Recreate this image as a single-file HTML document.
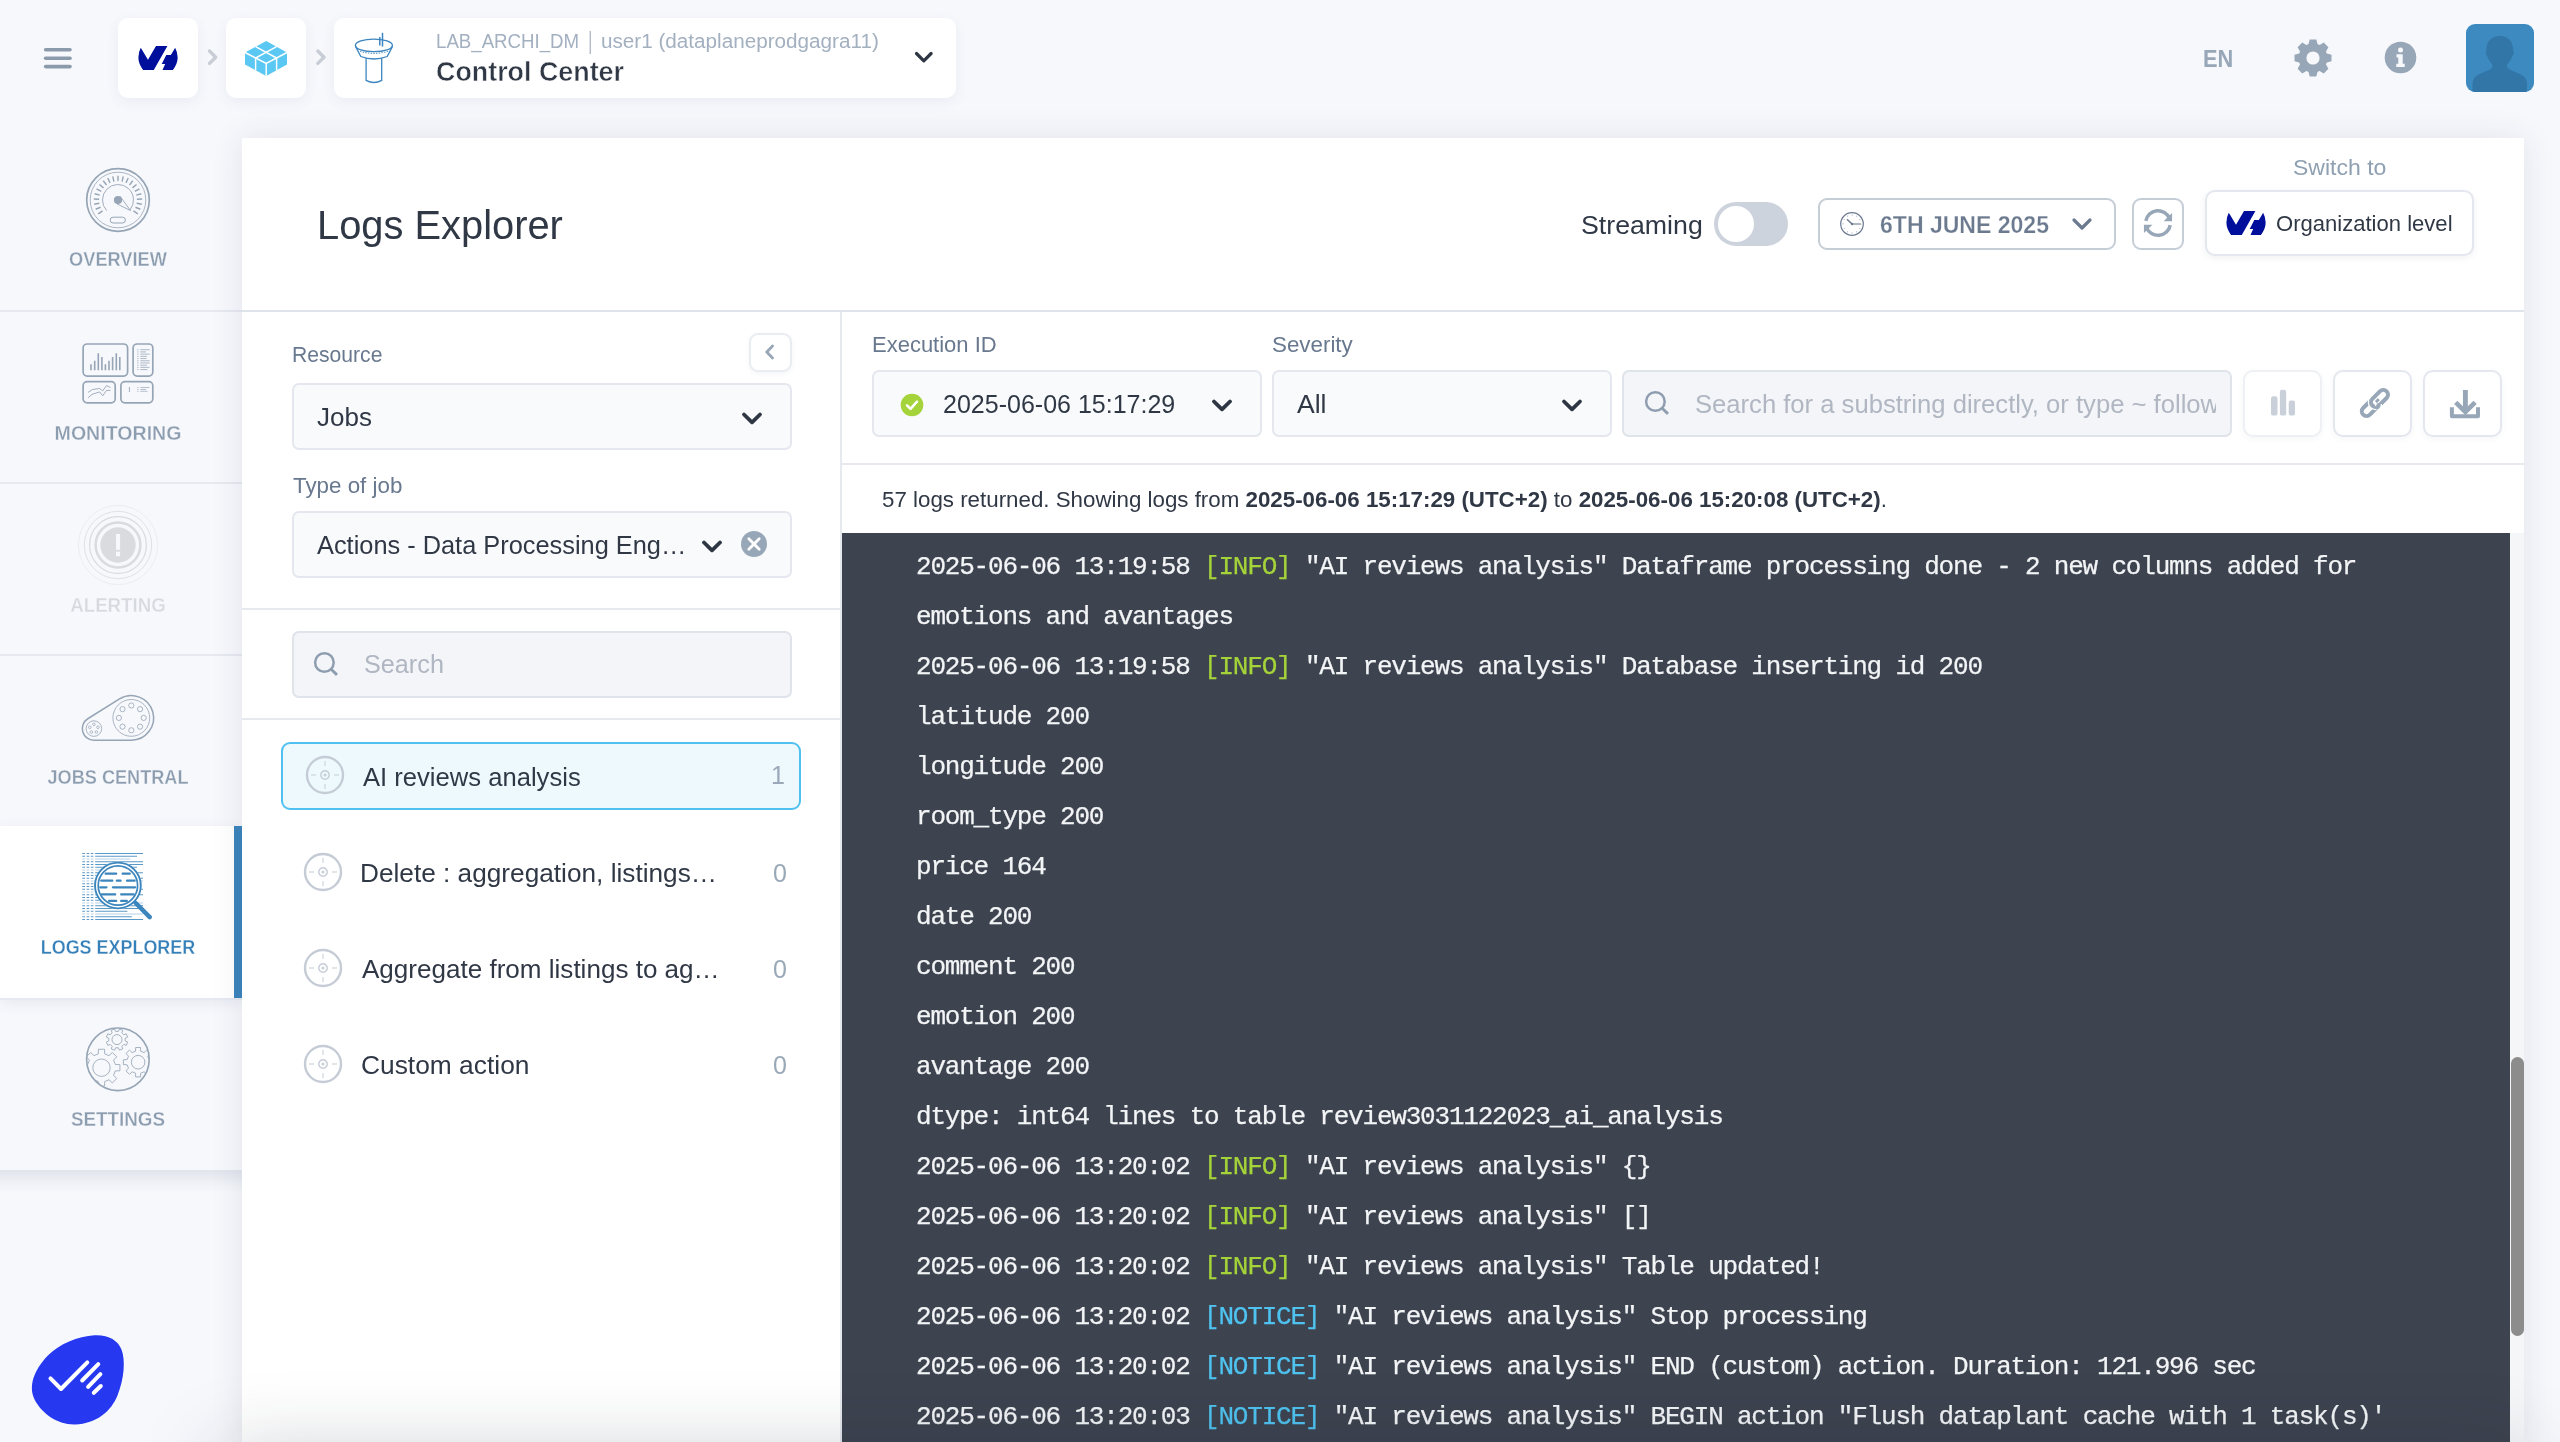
<!DOCTYPE html>
<html lang="en">
<head>
<meta charset="utf-8">
<title>Logs Explorer - Control Center</title>
<style>
*{box-sizing:border-box;margin:0;padding:0}
html,body{width:2560px;height:1442px;overflow:hidden;background:#f7f8fc}
#top,#side,#main,#logs{will-change:transform}
body{font-family:"Liberation Sans",sans-serif;color:#303846;position:relative}
.abs{position:absolute}
.t{position:absolute;white-space:nowrap;line-height:1}
svg{display:block;overflow:visible}

/* top bar */
.crumb{position:absolute;top:18px;height:80px;background:#fff;border-radius:10px;box-shadow:0 4px 14px rgba(60,80,120,.07)}
.sep{position:absolute;top:45px}

/* sidebar */
#side{position:absolute;left:0;top:138px;width:242px;height:1032px}
#side::after{content:'';position:absolute;left:0;top:1032px;width:242px;height:24px;background:linear-gradient(to bottom,rgba(60,75,110,.11),rgba(60,75,110,.03) 60%,rgba(60,75,110,0))}
.nav{position:absolute;left:0;width:242px;height:172px}
.nav::before{content:'';position:absolute;left:0;top:0;width:242px;height:2px;background:#e6e9f0}
.nav .lbl{position:absolute;left:0;width:236px;text-align:center;font-weight:bold;-webkit-text-stroke:.3px #f7f8fc;font-size:20.5px;color:#8d9db0;line-height:1;white-space:nowrap}
.nav.first::before,.nav.act::before{display:none}
.nav.act{background:#fff;box-shadow:0 4px 14px rgba(60,80,120,.10)}
.nav.act .lbl{color:#3680ba;-webkit-text-stroke-color:#fff}
.nav.dis .lbl{color:#d6d9de}

/* main */
#main{position:absolute;left:242px;top:138px;width:2282px;height:1304px;background:#fff;box-shadow:0 0 30px rgba(40,50,75,.10)}
.lab{position:absolute;font-size:21px;color:#68788e;line-height:1;white-space:nowrap}
.sel{position:absolute;height:67px;background:#f9fafc;border:2px solid #e4e8ee;border-radius:7px}
.sel .v{position:absolute;top:0px;line-height:63px;font-size:25px;color:#303846;white-space:nowrap}
.inp{position:absolute;height:67px;background:#f4f5f8;border:2px solid #dfe3ea;border-radius:7px}
.inp .ph{position:absolute;top:0;line-height:63px;font-size:25px;color:#b0b7c2;white-space:nowrap;overflow:hidden}
.btn{position:absolute;width:79px;height:67px;background:#fff;border:2px solid #e4e7ee;border-radius:10px;box-shadow:0 2px 6px rgba(60,80,120,.05)}
.hr{position:absolute;height:2px;background:#e6e9ee}
.item{position:absolute;left:281px;width:520px;height:67px}
.item .nm{position:absolute;left:80px;top:0;line-height:67px;font-size:25px;color:#303846;white-space:nowrap}
.item .ct{position:absolute;right:14px;top:0;line-height:67px;font-size:25px;color:#9aa8b8}
.item.on{background:#eef9fe;border:2px solid #4fc0f0;border-radius:9px}

/* logs */
#logs{position:absolute;left:842px;top:533px;width:1668px;height:909px;background:#3d434f;overflow:hidden}
#logs pre{position:absolute;left:74px;top:9px;font-family:"Liberation Mono",monospace;font-size:26px;letter-spacing:-1.2px;line-height:50px;color:#f2f4f6;white-space:pre;-webkit-text-stroke:.25px}
.i{color:#a5d33a}.n{color:#4fc3f0}
</style>
</head>
<body>

<!-- TOPBAR -->
<div id="top">
  <!-- hamburger -->
  <svg class="abs" style="left:43px;top:46px" width="30" height="24" viewBox="0 0 30 24"><g stroke="#8c9bab" stroke-width="3.6" stroke-linecap="round"><line x1="2.6" y1="3.8" x2="27" y2="3.8"/><line x1="2.6" y1="12.2" x2="27" y2="12.2"/><line x1="2.6" y1="20.6" x2="27" y2="20.6"/></g></svg>

  <!-- crumb 1 : logo -->
  <div class="crumb" style="left:118px;width:80px">
    <svg class="abs" style="left:20px;top:28px" width="40" height="24" viewBox="0 0 40 24"><g fill="#000e9c"><path d="M2.76,1.71 L9.97,13.64 L18,0.04 L29.4,0.04 L15.8,23.9 L5.1,23.9 Q0.4,17.5 0.4,11.4 Q0.4,6.2 2.76,1.71Z"/><path d="M37.16,1.7 L32.86,8.9 L28.28,8.9 L23.7,17.9 L27.17,17.9 L24.5,23.9 L34.9,23.9 Q39.65,17.5 39.65,11.4 Q39.65,6.2 37.16,1.7Z"/></g></svg>
  </div>
  <svg class="abs" style="left:204px;top:46px" width="18" height="24" viewBox="0 0 18 24"><polyline points="5.5,5 11.7,11.2 5.5,17.4" fill="none" stroke="#c8cdd6" stroke-width="3.4" stroke-linecap="round" stroke-linejoin="round"/></svg>

  <!-- crumb 2 : cubes -->
  <div class="crumb" style="left:226px;width:80px">
    <svg class="abs" style="left:18px;top:22px" width="44" height="37" viewBox="244 40 44 37"><polygon points="266.2,40.9 287,52.5 287,64.5 266.2,76.1 245,64.5 245,52.5" fill="#5bc8f3"/><g stroke="#fff" stroke-width="1.45" fill="none"><path d="M245,52.5 L266.2,63.5 L287,52.5"/><path d="M266.2,63.5 V76.1"/><path d="M255.6,46.7 L276.6,58 V70.3"/><path d="M276.6,46.7 L255.6,58 V70.3"/></g></svg>
  </div>
  <svg class="abs" style="left:312px;top:46px" width="18" height="24" viewBox="0 0 18 24"><polyline points="5.8,5 12,11.2 5.8,17.4" fill="none" stroke="#c8cdd6" stroke-width="3.4" stroke-linecap="round" stroke-linejoin="round"/></svg>

  <!-- crumb 3 : product selector -->
  <div class="crumb" style="left:334px;width:622px">
    <svg class="abs" style="left:20px;top:14px" width="40" height="52" viewBox="354 32 40 52"><g fill="none" stroke="#3d85c0" stroke-width="1.3"><ellipse cx="373.9" cy="45.4" rx="18.5" ry="6.3"/><path d="M355.5,46.4 L360.8,56.5 Q374,61.5 387.2,56.5 L392.5,46.4"/><path d="M360,51.3 Q374,55.5 388,51.3" stroke-dasharray="1.5 1.2" stroke-width="1.1" opacity=".8"/><path d="M366.1,58.3 V80.4 Q374,84.6 381.7,80.4 V58.3"/><path d="M382.5,32.8 V46.6" stroke-width="1.5"/><path d="M379.8,37 V45.6" stroke-width="1.5"/></g></svg>
    <div class="t" id="sub1" style="left:102.4px;top:12.5px;font-size:20px;color:#a3b0c0;letter-spacing:0px;transform:scaleX(0.9332);transform-origin:0 50%">LAB_ARCHI_DM</div><div class="t" id="sub2" style="left:254.2px;top:11.5px;font-size:23px;color:#b3bdca;letter-spacing:0px;transform:scaleX(0.7716);transform-origin:0 50%">|</div><div class="t" id="sub3" style="left:267.0px;top:12.5px;font-size:20px;color:#a3b0c0;letter-spacing:0px;transform:scaleX(1.0337);transform-origin:0 50%">user1 (dataplaneprodgagra11)</div>
    <div class="t" id="ttl" style="left:102.0px;top:39.9px;font-size:28px;font-weight:bold;color:#303846;letter-spacing:0px;transform:scaleX(0.9591);transform-origin:0 50%;-webkit-text-stroke:.5px #fff">Control Center</div>
    <svg class="abs" style="left:578px;top:31px" width="24" height="18" viewBox="0 0 24 18"><polyline points="4.5,4.5 11.8,11.8 19.1,4.5" fill="none" stroke="#2e3643" stroke-width="3.2" stroke-linecap="round" stroke-linejoin="round"/></svg>
  </div>

  <!-- right tools -->
  <div class="t" id="en" style="left:2203.1px;top:46.9px;font-size:24.5px;font-weight:bold;color:#98a7b7;letter-spacing:0px;transform:scaleX(0.8889);transform-origin:0 50%">EN</div>
  <svg class="abs" style="left:2293px;top:38px" width="40" height="40" viewBox="-20 -20 40 40"><g fill="#98a7b7"><circle r="14.4"/><path d="M-4.8,-13 L-3.3,-18.5 H3.3 L4.8,-13Z" transform="rotate(0)"/><path d="M-4.8,-13 L-3.3,-18.5 H3.3 L4.8,-13Z" transform="rotate(45)"/><path d="M-4.8,-13 L-3.3,-18.5 H3.3 L4.8,-13Z" transform="rotate(90)"/><path d="M-4.8,-13 L-3.3,-18.5 H3.3 L4.8,-13Z" transform="rotate(135)"/><path d="M-4.8,-13 L-3.3,-18.5 H3.3 L4.8,-13Z" transform="rotate(180)"/><path d="M-4.8,-13 L-3.3,-18.5 H3.3 L4.8,-13Z" transform="rotate(225)"/><path d="M-4.8,-13 L-3.3,-18.5 H3.3 L4.8,-13Z" transform="rotate(270)"/><path d="M-4.8,-13 L-3.3,-18.5 H3.3 L4.8,-13Z" transform="rotate(315)"/></g><circle r="6.6" fill="#f7f8fc"/></svg>
  <svg class="abs" style="left:2384px;top:41px" width="33" height="33" viewBox="-16.5 -16.5 33 33"><circle r="15.8" fill="#98a7b7"/><g fill="#f7f8fc"><circle cx="0" cy="-7.6" r="2.5"/><path d="M-4,-3.2 H2.2 V6.3 H4.2 V9.5 H-4.2 V6.3 H-2.2 V0 H-4Z"/></g></svg>
  <div class="abs" style="left:2466px;top:24px;width:68px;height:68px;border-radius:9px;background:#3d8ac0;overflow:hidden">
    <svg width="68" height="68" viewBox="2466 24 68 68"><path d="M2499.8,36 C2508,36 2513,41.5 2513,49 C2513,51 2514,51.5 2513.6,53.5 C2513.2,55.5 2512.2,55.8 2511.8,57 C2511,60 2508.5,62.5 2507.2,64.5 C2506.6,66.5 2507.2,68.2 2509,69.2 L2521,74.5 C2525,76.5 2527,79.5 2527,84 V92 H2472.5 V84 C2472.5,79.5 2474.5,76.5 2478.5,74.5 L2490.5,69.2 C2492.3,68.2 2492.9,66.5 2492.3,64.5 C2491,62.5 2488.5,60 2487.7,57 C2487.3,55.8 2486.3,55.5 2485.9,53.5 C2485.5,51.5 2486.5,51 2486.5,49 C2486.5,41.5 2491.5,36 2499.8,36Z" fill="#3275a7"/></svg>
  </div>
</div>

<!-- SIDEBAR -->
<div id="side">
  <div class="nav first" style="top:0px;height:172px"><svg class="abs" style="left:84px;top:28px" width="68" height="68" viewBox="-34 -34 68 68"><g fill="none" stroke="#96a5b5"><circle r="31.3" stroke-width="1.7"/><circle r="27.8" stroke-width=".8"/><path d="M-15.48,10.84L-19.82,13.88M-17.46,7.23L-22.36,9.26M-18.61,3.28L-23.83,4.2M-18.88,-0.82L-24.18,-1.06M-18.26,-4.89L-23.38,-6.26M-16.76,-8.73L-21.47,-11.17M-14.48,-12.15L-18.54,-15.56M-11.51,-14.99L-14.73,-19.2M-7.99,-17.13L-10.23,-21.93M-4.09,-18.45L-5.24,-23.63M0,-18.9L0,-24.2M4.09,-18.45L5.24,-23.63M7.99,-17.13L10.23,-21.93M11.51,-14.99L14.73,-19.2M14.48,-12.15L18.54,-15.56M16.76,-8.73L21.47,-11.17M18.26,-4.89L23.38,-6.26M18.88,-0.82L24.18,-1.06M18.61,3.28L23.83,4.2M17.46,7.23L22.36,9.26M15.48,10.84L19.82,13.88" stroke-width="1.4"/><path d="M-11.34,10.57 A15.5,15.5 0 1 1 12.05,9.75" stroke-width=".9"/><circle r="4.1" fill="#96a5b5" stroke="none"/><path d="M2.2,-3.4 L12.6,10.6 L-1,3.9Z" stroke-width=".9" fill="none"/><rect x="-7.8" y="17.2" width="15.2" height="5.8" rx="2.9" stroke-width="1"/></g></svg><div class="lbl" id="l_ov" style="top:110.7px;letter-spacing:0px;transform:scaleX(0.8881);transform-origin:50% 50%">OVERVIEW</div></div>
  <div class="nav " style="top:172px;height:172px"><svg class="abs" style="left:80px;top:30px" width="76" height="66" viewBox="80 340 76 66"><g fill="none" stroke="#96a5b5"><g stroke-width="1.7"><rect x="83.1" y="344" width="44.5" height="32.1" rx="4"/><rect x="133.1" y="344" width="19.7" height="32.1" rx="4"/><rect x="83.1" y="381.7" width="32.1" height="21.1" rx="4"/><rect x="120.9" y="381.7" width="31.9" height="21.1" rx="4"/></g><path d="M91,364.2V370.3M94.7,360.8V370.3M98.3,353.3V370.3M101.9,357.1V370.3M105.4,364.2V370.3M109,360.8V370.3M112.6,357.1V370.3M116.3,353.3V370.3M119.8,357.1V370.3" stroke-width="1.6"/><path d="M137.2,349.7h1.3M140.3,349.7H149.7M137.2,351.91h1.3M140.3,351.91H146M137.2,354.12h1.3M140.3,354.12H149.7M137.2,356.33h1.3M140.3,356.33H147M137.2,358.54h1.3M140.3,358.54H146.5M137.2,360.75h1.3M140.3,360.75H149.7M137.2,362.96h1.3M140.3,362.96H149.7M137.2,365.17h1.3M140.3,365.17H147M137.2,367.38h1.3M140.3,367.38H149.5M137.2,369.59h1.3M140.3,369.59H147.5" stroke-width=".9" opacity=".85"/><polyline points="88.1,392.4 92.5,389.5 99.7,388.5 102.7,390.9 106.5,385.6 110.4,387.5" stroke-width=".9"/><polyline points="88.1,397.7 92,394.3 99.7,391.9 102.7,395.8 106.5,390.4 110.4,390.4" stroke-width=".9"/><path d="M129.4,387V392.1" stroke-width=".9"/><path d="M137.2,387.5h1.3M140.3,387.5H149.3M137.2,389.5h1.3M140.3,389.5H146M137.2,391.3h1.3M140.3,391.3H147.5" stroke-width=".8" opacity=".85"/></g></svg><div class="lbl" id="l_mo" style="top:113.0px;letter-spacing:0px;transform:scaleX(0.9547);transform-origin:50% 50%">MONITORING</div></div>
  <div class="nav dis" style="top:344px;height:172px"><svg class="abs" style="left:76px;top:21px" width="84" height="84" viewBox="-42 -42 84 84"><g fill="none" stroke="#d9dbde"><circle r="39.6" stroke-width=".5" opacity=".8"/><circle r="33.7" stroke-width=".8"/><circle r="28.4" stroke-width="1.2"/><circle r="22.4" stroke-width="2.5"/><circle r="17.7" fill="#d9dbde" stroke="none"/><rect x="-2" y="-11" width="4.1" height="15.8" fill="#f7f8fc" stroke="none"/><rect x="-2" y="6.7" width="4.1" height="4.6" fill="#f7f8fc" stroke="none"/></g></svg><div class="lbl" id="l_al" style="top:113.0px;letter-spacing:0px;transform:scaleX(0.9126);transform-origin:50% 50%">ALERTING</div></div>
  <div class="nav " style="top:516px;height:172px"><svg class="abs" style="left:78px;top:36px" width="80" height="52" viewBox="78 690 80 52"><g fill="none" stroke="#96a5b5"><path d="M119.51,698.97 L87.76,718.76 A11.6,11.6 0 0 0 93.9,740.2 L131.3,740.2 A22.3,22.3 0 1 0 119.51,698.97Z" stroke-width="1.5"/><circle cx="131.3" cy="717.9" r="18.4" stroke-width=".8"/><circle cx="93.9" cy="728.6" r="7.8" stroke-width=".8"/><circle cx="131.3" cy="705.5" r="2.6" stroke-width=".8"/><circle cx="140.07" cy="709.13" r="2.6" stroke-width=".8"/><circle cx="143.7" cy="717.9" r="2.6" stroke-width=".8"/><circle cx="140.07" cy="726.67" r="2.6" stroke-width=".8"/><circle cx="131.3" cy="730.3" r="2.6" stroke-width=".8"/><circle cx="122.53" cy="726.67" r="2.6" stroke-width=".8"/><circle cx="118.9" cy="717.9" r="2.6" stroke-width=".8"/><circle cx="122.53" cy="709.13" r="2.6" stroke-width=".8"/><circle cx="93.9" cy="724.3" r="1.3" stroke-width=".7"/><circle cx="97.99" cy="727.27" r="1.3" stroke-width=".7"/><circle cx="96.43" cy="732.08" r="1.3" stroke-width=".7"/><circle cx="91.37" cy="732.08" r="1.3" stroke-width=".7"/><circle cx="89.81" cy="727.27" r="1.3" stroke-width=".7"/></g></svg><div class="lbl" id="l_jc" style="top:113.2px;letter-spacing:0px;transform:scaleX(0.8847);transform-origin:50% 50%">JOBS CENTRAL</div></div>
  <div class="nav act" style="top:688px;height:172px"><svg class="abs" style="left:80px;top:24px" width="76" height="74" viewBox="80 850 76 74"><g fill="none" stroke="#3c85bd"><path d="M82.3,853.5H85M86.6,853.5H89.3M90.8,853.5H93.4M95.2,853.5H143" stroke-width=".85" opacity="1"/><path d="M82.3,856.25H85M86.6,856.25H89.3M90.8,856.25H93.4M95.2,856.25H137" stroke-width=".85" opacity="1"/><path d="M82.3,859H85M86.6,859H89.3M90.8,859H93.4M95.2,859H130.3" stroke-width=".85" opacity=".45"/><path d="M82.3,861.75H85M86.6,861.75H89.3M90.8,861.75H93.4M95.2,861.75H143" stroke-width=".85" opacity="1"/><path d="M82.3,864.5H85M86.6,864.5H89.3M90.8,864.5H93.4M95.2,864.5H143" stroke-width=".85" opacity="1"/><path d="M82.3,867.25H85M86.6,867.25H89.3M90.8,867.25H93.4M95.2,867.25H137" stroke-width=".85" opacity="1"/><path d="M82.3,870H85M86.6,870H89.3M90.8,870H93.4M95.2,870H130" stroke-width=".85" opacity=".45"/><path d="M82.3,872.75H85M86.6,872.75H89.3M90.8,872.75H93.4M95.2,872.75H143" stroke-width=".85" opacity="1"/><path d="M82.3,875.5H85M86.6,875.5H89.3M90.8,875.5H93.4M95.2,875.5H137" stroke-width=".85" opacity="1"/><path d="M82.3,878.25H85M86.6,878.25H89.3M90.8,878.25H93.4M95.2,878.25H143" stroke-width=".85" opacity="1"/><path d="M82.3,881H85M86.6,881H89.3M90.8,881H93.4M95.2,881H143" stroke-width=".85" opacity=".45"/><path d="M82.3,883.75H85M86.6,883.75H89.3M90.8,883.75H93.4M95.2,883.75H137" stroke-width=".85" opacity="1"/><path d="M82.3,886.5H85M86.6,886.5H89.3M90.8,886.5H93.4M95.2,886.5H130" stroke-width=".85" opacity="1"/><path d="M82.3,889.25H85M86.6,889.25H89.3M90.8,889.25H93.4M95.2,889.25H143" stroke-width=".85" opacity="1"/><path d="M82.3,892H85M86.6,892H89.3M90.8,892H93.4M95.2,892H137" stroke-width=".85" opacity=".45"/><path d="M82.3,894.75H85M86.6,894.75H89.3M90.8,894.75H93.4M95.2,894.75H143" stroke-width=".85" opacity="1"/><path d="M82.3,897.5H85M86.6,897.5H89.3M90.8,897.5H93.4M95.2,897.5H137" stroke-width=".85" opacity="1"/><path d="M82.3,900.25H85M86.6,900.25H89.3M90.8,900.25H93.4M95.2,900.25H130" stroke-width=".85" opacity="1"/><path d="M82.3,903H85M86.6,903H89.3M90.8,903H93.4M95.2,903H143" stroke-width=".85" opacity=".45"/><path d="M82.3,905.75H85M86.6,905.75H89.3M90.8,905.75H93.4M95.2,905.75H143" stroke-width=".85" opacity="1"/><path d="M82.3,908.5H85M86.6,908.5H89.3M90.8,908.5H93.4M95.2,908.5H143" stroke-width=".85" opacity="1"/><path d="M82.3,911.25H85M86.6,911.25H89.3M90.8,911.25H93.4M95.2,911.25H127.4" stroke-width=".85" opacity="1"/><path d="M82.3,914H85M86.6,914H89.3M90.8,914H93.4M95.2,914H143" stroke-width=".85" opacity=".45"/><path d="M82.3,916.75H85M86.6,916.75H89.3M90.8,916.75H93.4M95.2,916.75H131.8" stroke-width=".85" opacity="1"/><path d="M82.3,919.5H85M86.6,919.5H89.3M90.8,919.5H93.4M95.2,919.5H143" stroke-width=".85" opacity="1"/><circle cx="117.9" cy="885.5" r="23.8" fill="#fff" stroke="none"/><circle cx="117.9" cy="885.5" r="22.9" stroke-width="1.9"/><circle cx="117.9" cy="885.5" r="19.7" stroke-width="1.7"/><path d="M105.6,873.7H116.22M122.59,873.7H129.82M101.23,880.7H112.34M116.77,880.7H120.59M126.96,880.7H134.67M100.26,887.3H106.51M112.88,887.3H135.16M101.72,894.4H115.25M121.14,894.4H133.7M109,900.9H116.22M121.14,900.9H126.9" stroke-width="2.2" stroke-linecap="round"/><path d="M135.7,903 L149.7,917.1" stroke-width="4.4" stroke-linecap="round"/></g></svg><div class="lbl" id="l_le" style="top:111.0px;letter-spacing:0px;transform:scaleX(0.8748);transform-origin:50% 50%">LOGS EXPLORER</div><div class="abs" style="left:234px;top:0;width:8px;height:172px;background:#3c85bd"></div></div>
  <div class="nav " style="top:860px;height:172px"><svg class="abs" style="left:84px;top:27px" width="68" height="68" viewBox="84 1025 68 68"><g fill="none" stroke="#96a5b5"><defs><clipPath id="sc"><circle cx="117.9" cy="1059.3" r="30.8"/></clipPath></defs><circle cx="117.9" cy="1059.3" r="31.3" stroke-width="1.6"/><g clip-path="url(#sc)" stroke-width=".85"><path d="M118.36,1031.41 L119.46,1028.98 L122.77,1030.35 L121.83,1032.85 L123.75,1034.77 L126.25,1033.83 L127.62,1037.14 L125.19,1038.24 L125.19,1040.96 L127.62,1042.06 L126.25,1045.37 L123.75,1044.43 L121.83,1046.35 L122.77,1048.85 L119.46,1050.22 L118.36,1047.79 L115.64,1047.79 L114.54,1050.22 L111.23,1048.85 L112.17,1046.35 L110.25,1044.43 L107.75,1045.37 L106.38,1042.06 L108.81,1040.96 L108.81,1038.24 L106.38,1037.14 L107.75,1033.83 L110.25,1034.77 L112.17,1032.85 L111.23,1030.35 L114.54,1028.98 L115.64,1031.41Z"/><circle cx="117" cy="1039.6" r="5"/><path d="M98.29,1053.87 L98.43,1049.25 L104.57,1049.25 L104.71,1053.87 L109.01,1055.65 L112.37,1052.49 L116.71,1056.83 L113.55,1060.19 L115.33,1064.49 L119.95,1064.63 L119.95,1070.77 L115.33,1070.91 L113.55,1075.21 L116.71,1078.57 L112.37,1082.91 L109.01,1079.75 L104.71,1081.53 L104.57,1086.15 L98.43,1086.15 L98.29,1081.53 L93.99,1079.75 L90.63,1082.91 L86.29,1078.57 L89.45,1075.21 L87.67,1070.91 L83.05,1070.77 L83.05,1064.63 L87.67,1064.49 L89.45,1060.19 L86.29,1056.83 L90.63,1052.49 L93.99,1055.65Z"/><circle cx="101.5" cy="1067.7" r="8.7"/><path d="M135.55,1051.19 L135.65,1047.5 L140.55,1047.5 L140.65,1051.19 L144.08,1052.61 L146.76,1050.08 L150.22,1053.54 L147.69,1056.22 L149.11,1059.65 L152.8,1059.75 L152.8,1064.65 L149.11,1064.75 L147.69,1068.18 L150.22,1070.86 L146.76,1074.32 L144.08,1071.79 L140.65,1073.21 L140.55,1076.9 L135.65,1076.9 L135.55,1073.21 L132.12,1071.79 L129.44,1074.32 L125.98,1070.86 L128.51,1068.18 L127.09,1064.75 L123.4,1064.65 L123.4,1059.75 L127.09,1059.65 L128.51,1056.22 L125.98,1053.54 L129.44,1050.08 L132.12,1052.61Z"/><circle cx="138.1" cy="1062.2" r="6.8"/></g></g></svg><div class="lbl" id="l_se" style="top:111.0px;letter-spacing:0px;transform:scaleX(0.9178);transform-origin:50% 50%">SETTINGS</div></div>
</div>

<!-- MAIN -->
<div id="main">
  <div class="t" id="h1" style="left:75.2px;top:66.6px;font-size:40px;color:#303846;letter-spacing:0px;transform:scaleX(0.9963);transform-origin:0 50%">Logs Explorer</div>
  <div class="t" id="strm" style="left:1339.4px;top:74.3px;font-size:26px;color:#303846;letter-spacing:0px;transform:scaleX(1.0275);transform-origin:0 50%">Streaming</div>
  <div class="abs" style="left:1472px;top:64px;width:74px;height:44px;border-radius:22px;background:#cdd3dc"><div class="abs" style="left:4px;top:4px;width:36px;height:36px;border-radius:18px;background:#fff"></div></div>
  <div class="abs" style="left:1576px;top:60px;width:298px;height:52px;border:2px solid #c5cdd7;border-radius:9px;background:#fff"><svg class="abs" style="left:18.500px;top:11px" width="26" height="26" viewBox="-13 -13 26 26"><g fill="none" stroke="#6b7a8e"><circle r="11.3" stroke-width="1.2"/><path d="M-5,-4.700L0,0" stroke-width="1.5"/><path d="M0,0H8.800" stroke-width="1.1"/><circle r="9" stroke-width="1" stroke-dasharray=".9 3.810" stroke-dashoffset=".45" opacity=".8"/><circle r="1.2" fill="#6b7a8e" stroke="none"/></g></svg><div class="t" id="date" style="left:60.2px;top:12.9px;font-size:24.5px;font-weight:bold;color:#7c8b9c;letter-spacing:0px;transform:scaleX(0.9401);transform-origin:0 50%;-webkit-text-stroke:.25px #fff;color:#6b7a8e">6TH JUNE 2025</div><svg class="abs" style="left:251px;top:17px" width="22" height="14" viewBox="0 0 22 14"><polyline points="3,3 11,11 19,3" fill="none" stroke="#6b7a8e" stroke-width="3.2" stroke-linecap="round" stroke-linejoin="round"/></svg></div>
  <div class="abs" style="left:1890px;top:60px;width:52px;height:52px;border:2px solid #c5cdd7;border-radius:9px;background:#fff"><svg class="abs" style="left:8.100px;top:8.400px" width="32" height="30" viewBox="-16 -15 32 30"><g fill="none" stroke="#98a7b7" stroke-width="3.500"><path d="M-12.200,-2.100 A12.400,12.400 0 0 1 11.500,-4.600"/><path d="M12.200,2.100 A12.400,12.400 0 0 1 -11.500,4.600"/></g><g fill="#98a7b7"><path d="M14.050,-10.100 V-1.700 H5.650Z"/><path d="M-14.050,10.100 V1.700 H-5.650Z"/></g></svg></div>
  <div class="t" id="swt" style="left:2050.6px;top:18.8px;font-size:21.6px;color:#98a7b7;letter-spacing:0px;transform:scaleX(1.0658);transform-origin:0 50%;color:#8fa0b2">Switch to</div>
  <div class="abs" style="left:1963px;top:52px;width:269px;height:66px;border:2px solid #e4e7ee;border-radius:10px;background:#fff;box-shadow:0 2px 6px rgba(60,80,120,.08)"><svg class="abs" style="left:19px;top:19px" width="40" height="24" viewBox="0 0 40 24"><g fill="#000e9c"><path d="M2.76,1.71 L9.97,13.64 L18,0.04 L29.4,0.04 L15.8,23.9 L5.1,23.9 Q0.4,17.5 0.4,11.4 Q0.4,6.2 2.76,1.71Z"/><path d="M37.16,1.7 L32.86,8.9 L28.28,8.9 L23.7,17.9 L27.17,17.9 L24.5,23.9 L34.9,23.9 Q39.65,17.5 39.65,11.4 Q39.65,6.2 37.16,1.7Z"/></g></svg><div class="t" id="org" style="left:68.9px;top:20.9px;font-size:22.5px;color:#303846;letter-spacing:0px;transform:scaleX(0.9802);transform-origin:0 50%">Organization level</div></div>
  <div class="hr" style="left:0;top:172px;width:2282px;background:#dfe3ea"></div>
  <div class="abs" style="left:598px;top:174px;width:2px;height:1130px;background:#e6e9ee"></div>
  <div class="lab" id="lres" style="left:50.2px;top:206.0px;letter-spacing:0px;font-size:22px;transform:scaleX(0.9605);transform-origin:0 50%">Resource</div>
  <div class="abs" style="left:506.5px;top:194.5px;width:43px;height:39px;border:2px solid #e9ecf1;border-radius:9px;background:#fff;box-shadow:0 2px 5px rgba(60,80,120,.06)"><svg class="abs" style="left:12px;top:8px" width="14" height="18" viewBox="0 0 14 18"><polyline points="9.5,3 3.8,9 9.5,15" fill="none" stroke="#98a7b7" stroke-width="2.8" stroke-linecap="round" stroke-linejoin="round"/></svg></div>
  <div class="sel" style="left:50px;top:245px;width:500px"><div class="v" id="vjobs" style="left:23.4px;letter-spacing:0px;top:0.7px;font-size:26px;transform:scaleX(1.0003);transform-origin:0 50%">Jobs</div><svg class="abs" style="left:446px;top:26px" width="24" height="16" viewBox="0 0 24 16"><polyline points="4,3.5 12,11.3 20,3.5" fill="none" stroke="#2e3643" stroke-width="3.8" stroke-linecap="round" stroke-linejoin="round"/></svg></div>
  <div class="lab" id="ltype" style="left:51.2px;top:336.8px;letter-spacing:0px;font-size:22px;transform:scaleX(1.0156);transform-origin:0 50%">Type of job</div>
  <div class="sel" style="left:50px;top:373px;width:500px"><div class="v" id="vact" style="left:22.6px;letter-spacing:0px;top:0.6px;font-size:26px;transform:scaleX(0.9754);transform-origin:0 50%">Actions - Data Processing Eng…</div><svg class="abs" style="left:406px;top:26px" width="24" height="16" viewBox="0 0 24 16"><polyline points="4,3.5 12,11.3 20,3.5" fill="none" stroke="#2e3643" stroke-width="3.8" stroke-linecap="round" stroke-linejoin="round"/></svg><svg class="abs" style="left:446px;top:17px" width="28" height="28" viewBox="-14 -14 28 28"><circle r="13" fill="#98a7b7"/><path d="M-5.2,-5.2L5.2,5.2M5.2,-5.2L-5.2,5.2" stroke="#fff" stroke-width="2.8" stroke-linecap="round"/></svg></div>
  <div class="hr" style="left:0;top:470px;width:598px"></div>
  <div class="inp" style="left:50px;top:493px;width:500px"><svg class="abs" style="left:20px;top:18px" width="28" height="28" viewBox="0 0 28 28"><g fill="none" stroke="#8e9eb0"><circle cx="10.400" cy="11.550" r="9.300" stroke-width="2.500"/><path d="M16.900,18.050 L23,23.900" stroke-width="2.900"/></g></svg><div class="ph" id="phs" style="left:69.8px;letter-spacing:0px;top:0.3px;font-size:26px;transform:scaleX(0.9699);transform-origin:0 50%">Search</div></div>
  <div class="hr" style="left:0;top:580px;width:598px"></div>
  <div class="item on" style="left:39px;top:604px;width:520px;height:68px"><div style="position:absolute;left:22px;top:11px"><svg width="40" height="40" viewBox="-20 -20 40 40"><g fill="none" stroke="#c5ccd6"><circle r="18" stroke-width="2.4"/><circle r="4.2" stroke-width="1.4"/><circle r="1.6" fill="#c9d0d9" stroke="none"/><path d="M0,-14V-9M0,9V14M-14,0H-9M9,0H14" stroke-width="1"/></g></svg></div><div class="nm" id="i1" style="left:79.8px;line-height:63px;letter-spacing:0px;top:2.2px;font-size:26px;transform:scaleX(0.9847);transform-origin:0 50%">AI reviews analysis</div><div class="ct" style="right:14px;line-height:63px">1</div></div>
  <div class="item" style="left:39px;top:702px"><div style="position:absolute;left:22px;top:12px"><svg width="40" height="40" viewBox="-20 -20 40 40"><g fill="none" stroke="#c5ccd6"><circle r="18" stroke-width="2.4"/><circle r="4.2" stroke-width="1.4"/><circle r="1.6" fill="#c9d0d9" stroke="none"/><path d="M0,-14V-9M0,9V14M-14,0H-9M9,0H14" stroke-width="1"/></g></svg></div><div class="nm" id="i2" style="left:79.4px;top:0.0px;font-size:26px;letter-spacing:0px;transform:scaleX(1.0081);transform-origin:0 50%">Delete : aggregation, listings…</div><div class="ct">0</div></div>
  <div class="item" style="left:39px;top:798px"><div style="position:absolute;left:22px;top:12px"><svg width="40" height="40" viewBox="-20 -20 40 40"><g fill="none" stroke="#c5ccd6"><circle r="18" stroke-width="2.4"/><circle r="4.2" stroke-width="1.4"/><circle r="1.6" fill="#c9d0d9" stroke="none"/><path d="M0,-14V-9M0,9V14M-14,0H-9M9,0H14" stroke-width="1"/></g></svg></div><div class="nm" id="i3" style="left:81.4px;top:0.1px;font-size:26px;letter-spacing:0px;transform:scaleX(1.0019);transform-origin:0 50%">Aggregate from listings to ag…</div><div class="ct">0</div></div>
  <div class="item" style="left:39px;top:894px"><div style="position:absolute;left:22px;top:12px"><svg width="40" height="40" viewBox="-20 -20 40 40"><g fill="none" stroke="#c5ccd6"><circle r="18" stroke-width="2.4"/><circle r="4.2" stroke-width="1.4"/><circle r="1.6" fill="#c9d0d9" stroke="none"/><path d="M0,-14V-9M0,9V14M-14,0H-9M9,0H14" stroke-width="1"/></g></svg></div><div class="nm" id="i4" style="left:80.4px;top:-0.1px;font-size:26px;letter-spacing:0px;transform:scaleX(1.0136);transform-origin:0 50%">Custom action</div><div class="ct">0</div></div>
  <div class="lab" id="lexe" style="left:629.8px;top:196.0px;letter-spacing:0px;font-size:22px;transform:scaleX(0.9995);transform-origin:0 50%">Execution ID</div>
  <div class="lab" id="lsev" style="left:1029.8px;top:196.0px;letter-spacing:0px;font-size:22px;transform:scaleX(1.0163);transform-origin:0 50%">Severity</div>
  <div class="sel" style="left:630px;top:232px;width:390px"><svg class="abs" style="left:26px;top:21px" width="24" height="24" viewBox="-12 -12 24 24"><circle r="11.3" fill="#a5d33a"/><polyline points="-5,0.3 -1.5,3.8 5,-3.4" fill="none" stroke="#fff" stroke-width="2.6" stroke-linecap="round" stroke-linejoin="round"/></svg><div class="v" id="vexe" style="left:68.8px;letter-spacing:0px;top:0.5px;font-size:26px;transform:scaleX(0.9621);transform-origin:0 50%">2025-06-06 15:17:29</div><svg class="abs" style="left:336px;top:26px" width="24" height="16" viewBox="0 0 24 16"><polyline points="4,3.5 12,11.3 20,3.5" fill="none" stroke="#2e3643" stroke-width="3.8" stroke-linecap="round" stroke-linejoin="round"/></svg></div>
  <div class="sel" style="left:1030px;top:232px;width:340px"><div class="v" id="vall" style="left:22.6px;letter-spacing:0px;top:0.5px;font-size:26px;transform:scaleX(1.0209);transform-origin:0 50%">All</div><svg class="abs" style="left:286px;top:26px" width="24" height="16" viewBox="0 0 24 16"><polyline points="4,3.5 12,11.3 20,3.5" fill="none" stroke="#2e3643" stroke-width="3.8" stroke-linecap="round" stroke-linejoin="round"/></svg></div>
  <div class="inp" style="left:1380px;top:232px;width:610px"><svg class="abs" style="left:21px;top:18px" width="28" height="28" viewBox="0 0 28 28"><g fill="none" stroke="#8e9eb0"><circle cx="10.400" cy="11.550" r="9.300" stroke-width="2.500"/><path d="M16.900,18.050 L23,23.900" stroke-width="2.900"/></g></svg><div class="ph" id="phl" style="left:70.6px;width:529px;font-size:26px;letter-spacing:0px;top:0.5px;transform:scaleX(.985);transform-origin:0 50%">Search for a substring directly, or type ~ followed by a regex</div></div>
  <div class="btn" style="left:2001px;top:232px;border-color:#eef0f4"></div>
  <div class="btn" style="left:2091px;top:232px"></div>
  <div class="btn" style="left:2181px;top:232px"></div>
  <svg class="abs" style="left:1998px;top:227px" width="270" height="76" viewBox="2240 365 270 76">
    <g fill="#c9d0da"><rect x="2271" y="396.3" width="6.500" height="19.300" rx="2.200"/><rect x="2279.900" y="389.700" width="6.300" height="25.900" rx="2.200"/><rect x="2288.700" y="400.600" width="6.300" height="15" rx="2.200"/></g>
    <g transform="translate(2374.900,403) rotate(-45)" fill="none" stroke-linejoin="round"><path d="M-11.80,-4.75 H-1.20 A4.75,4.75 0 0 1 -1.20,4.75 H-11.80 A4.75,4.75 0 0 1 -11.80,-4.75Z" stroke="#98a7b7" stroke-width="4"/><path d="M1.20,-4.75 H11.80 A4.75,4.75 0 0 1 11.80,4.75 H1.20 A4.75,4.75 0 0 1 1.20,-4.75Z" stroke="#fff" stroke-width="6.600"/><path d="M1.20,-4.75 H11.80 A4.75,4.75 0 0 1 11.80,4.75 H1.20 A4.75,4.75 0 0 1 1.20,-4.75Z" stroke="#98a7b7" stroke-width="4"/><path d="M2.10,3.42 A4.75,4.75 0 0 1 -2.35,4.61" stroke="#fff" stroke-width="6.600"/><path d="M2.54,2.92 A4.75,4.75 0 0 1 -2.98,4.40" stroke="#98a7b7" stroke-width="4"/></g>
    <g fill="none" stroke="#98a7b7"><path d="M2465.400,390 V410" stroke-width="4.900"/><polyline points="2455.700,402.300 2465.400,412 2475.100,402.300" stroke-width="4.600"/><path d="M2451.900,407.300 V416.300 H2478 V407.300" stroke-width="4" stroke-linejoin="round"/></g>
  </svg>
  <div class="hr" style="left:600px;top:325px;width:1682px"></div>
  <div class="t" id="stat" style="left:639.6px;top:350.5px;font-size:22px;color:#303846;letter-spacing:0px;transform:scaleX(1.0145);transform-origin:0 50%">57 logs returned. Showing logs from <b>2025-06-06 15:17:29 (UTC+2)</b> to <b>2025-06-06 15:20:08 (UTC+2)</b>.</div>
</div>

<!-- LOGS -->
<div id="logs"><pre>2025-06-06 13:19:58 <span class="i">[INFO]</span> "AI reviews analysis" Dataframe processing done - 2 new columns added for
emotions and avantages
2025-06-06 13:19:58 <span class="i">[INFO]</span> "AI reviews analysis" Database inserting id 200
latitude 200
longitude 200
room_type 200
price 164
date 200
comment 200
emotion 200
avantage 200
dtype: int64 lines to table review3031122023_ai_analysis
2025-06-06 13:20:02 <span class="i">[INFO]</span> "AI reviews analysis" {}
2025-06-06 13:20:02 <span class="i">[INFO]</span> "AI reviews analysis" []
2025-06-06 13:20:02 <span class="i">[INFO]</span> "AI reviews analysis" Table updated!
2025-06-06 13:20:02 <span class="n">[NOTICE]</span> "AI reviews analysis" Stop processing
2025-06-06 13:20:02 <span class="n">[NOTICE]</span> "AI reviews analysis" END (custom) action. Duration: 121.996 sec
2025-06-06 13:20:03 <span class="n">[NOTICE]</span> "AI reviews analysis" BEGIN action "Flush dataplant cache with 1 task(s)'
</pre></div>
<!-- scrollbar -->
<div class="abs" style="left:2510px;top:533px;width:14px;height:909px;background:#f5f6f8"></div>
<div class="abs" style="left:2511px;top:1057px;width:13px;height:279px;border-radius:6.5px;background:#8c8c8c"></div>
<div class="abs" style="left:222px;top:1460px;width:2302px;height:40px;box-shadow:0 0 80px rgba(30,40,60,.34)"></div>
<!-- help bubble -->
<svg class="abs" style="left:28px;top:1332px" width="100" height="96" viewBox="28 1332 100 96"><path d="M94.5,1335.2 C108,1334.5 118,1340 121.5,1349.5 C125.5,1360 124.5,1378 117.3,1396.1 C111,1411 97,1424 75,1424.5 C58,1425 40,1413 33.5,1397 C28.5,1383 36,1368 47.9,1355.5 C59,1344 78,1336 94.5,1335.2Z" fill="#2739f0"/><g fill="none" stroke="#fff" stroke-width="4" stroke-linecap="round" stroke-linejoin="round"><polyline points="50.500,1378.400 61,1389 87.300,1362.300"/><path d="M82.200,1380.500 L98.300,1364.200M88.100,1386.800 L100.400,1374.100M93.800,1392.800 L100.800,1386"/></g></svg>

</body>
</html>
